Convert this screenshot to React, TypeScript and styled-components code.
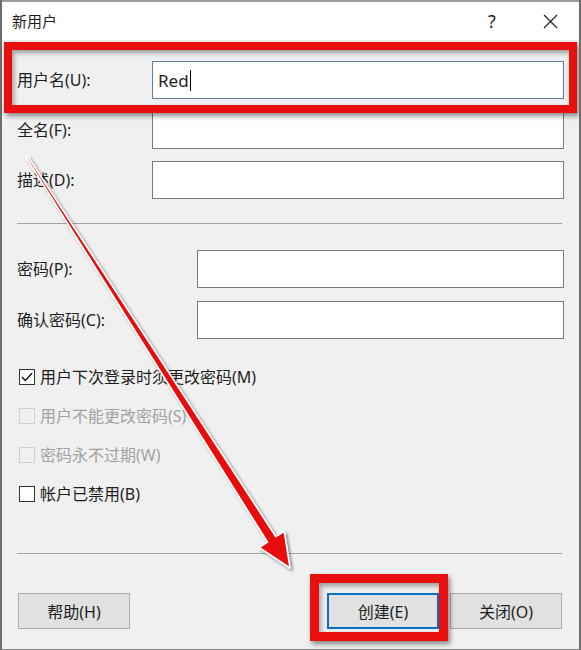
import React from 'react';
import styled, { createGlobalStyle } from 'styled-components';

const GlobalStyle = createGlobalStyle`
    body {
        margin: 0;
        background: #f0f0f0;
        font-family: "Noto Sans", "Noto Sans CJK SC", sans-serif;
        color: #1e1e1e;
    }
`;

const Window = styled.div`
    position: relative;
    width: 581px;
    height: 650px;
    box-sizing: border-box;
    border-left: 2px solid #6d6d6d;
    border-right: 2px solid #6d6d6d;
    border-bottom: 1px solid #8a8a8a;
    background: #f0f0f0;
    display: flex;
    flex-direction: column;
    overflow: hidden;
`;

const TitleBar = styled.div`
    height: 40px;
    box-sizing: border-box;
    border-top: 2px solid #9c9c9c;
    background: #ffffff;
    display: flex;
    align-items: center;
    padding-left: 10px;
    padding-right: 6px;
`;

const Title = styled.div`
    flex: 1;
    font-size: 15px;
    line-height: 20px;
`;

const TitleButton = styled.div<{ $gap?: number }>`
    width: 46px;
    height: 38px;
    display: flex;
    align-items: center;
    justify-content: center;
    margin-right: ${p => p.$gap ?? 0}px;
    font-size: 18px;
    color: #222;
`;

const Body = styled.div`
    display: flex;
    flex-direction: column;
    padding: 0 15px;
`;

const FormRow = styled.div<{ $top: number }>`
    position: relative;
    display: flex;
    align-items: center;
    height: 38px;
    margin-top: ${p => p.$top}px;
`;

const Label = styled.div<{ $width: number }>`
    width: ${p => p.$width}px;
    flex-shrink: 0;
    font-size: 16px;
    line-height: 20px;
`;

const TextBox = styled.div<{ $focused?: boolean }>`
    flex: 1;
    height: 38px;
    box-sizing: border-box;
    border: 1px solid ${p => (p.$focused ? '#5d7f9e' : '#7a7a7a')};
    background: #ffffff;
    display: flex;
    align-items: center;
    padding-left: 5px;
    font-size: 17px;
`;

const Caret = styled.span`
    display: inline-block;
    width: 1px;
    height: 21px;
    margin-left: 1px;
    background: #000;
`;

const Separator = styled.div<{ $top: number }>`
    height: 1px;
    margin-top: ${p => p.$top}px;
    margin-right: 2px;
    background: #a3a3a3;
`;

const CheckRow = styled.div<{ $top: number; $disabled?: boolean }>`
    display: flex;
    align-items: center;
    gap: 5px;
    height: 24px;
    margin-top: ${p => p.$top}px;
    padding-left: 2px;
    font-size: 16px;
    line-height: 20px;
    color: ${p => (p.$disabled ? '#a2a2a2' : '#1e1e1e')};
`;

const Box = styled.span<{ $disabled?: boolean }>`
    width: 16px;
    height: 16px;
    box-sizing: border-box;
    border: 1px solid ${p => (p.$disabled ? '#cfcfcf' : '#333333')};
    background: ${p => (p.$disabled ? '#f0f0f0' : '#ffffff')};
    display: flex;
    align-items: center;
    justify-content: center;
`;

const ButtonRow = styled.div`
    display: flex;
    gap: 11px;
    margin-top: 39px;
    padding-left: 1px;
    padding-right: 2px;
`;

const Spacer = styled.div`
    flex: 1;
`;

const ButtonWrap = styled.div`
    position: relative;
    display: flex;
`;

const Button = styled.div<{ $default?: boolean }>`
    width: 112px;
    height: 36px;
    box-sizing: border-box;
    border: ${p => (p.$default ? '2px solid #0a6fc9' : '1px solid #adadad')};
    background: #e1e1e1;
    display: flex;
    align-items: center;
    justify-content: center;
    font-size: 16px;
`;

const Highlight = styled.div<{ $l: number; $t: number; $r: number; $b: number; $w: number }>`
    position: absolute;
    left: ${p => p.$l}px;
    top: ${p => p.$t}px;
    right: ${p => p.$r}px;
    bottom: ${p => p.$b}px;
    border: ${p => p.$w}px solid #e8100f;
    box-shadow: 2px 3px 5px rgba(0, 0, 0, 0.45), inset 2px 3px 5px rgba(0, 0, 0, 0.35);
    pointer-events: none;
    z-index: 2;
`;

const ArrowLayer = styled.svg`
    position: absolute;
    left: -2px;
    top: 0;
    width: 581px;
    height: 650px;
    pointer-events: none;
    z-index: 3;
`;

interface CheckItemProps {
    label: string;
    top: number;
    checked?: boolean;
    disabled?: boolean;
}

const CheckItem: React.FC<CheckItemProps> = ({ label, top, checked, disabled }) => (
    <CheckRow $top={top} $disabled={disabled}>
        <Box $disabled={disabled}>
            {checked && (
                <svg width="12" height="10" viewBox="0 0 12 10">
                    <path d="M1 5 L4.3 8.5 L11 1.2" fill="none" stroke="#111" strokeWidth="1.4" />
                </svg>
            )}
        </Box>
        {label}
    </CheckRow>
);

// tapered red annotation arrow, from the 全名 label down to 创建
const Arrow = () => {
    const pts = '27.8,156.5 275.9,536.7 284.3,531.3 290,568 259.1,547.5 267.5,542.1 26.2,157.5';
    return (
        <ArrowLayer viewBox="0 0 581 650">
            <defs>
                <filter id="shade" x="-10%" y="-10%" width="130%" height="130%">
                    <feDropShadow dx="2" dy="2" stdDeviation="1.6" floodColor="#000" floodOpacity="0.45" />
                </filter>
            </defs>
            <polygon points={pts} fill="#e8100f" stroke="#ffffff" strokeWidth="1.6" strokeLinejoin="round" filter="url(#shade)" />
        </ArrowLayer>
    );
};

export default function App() {
    return (
        <>
            <GlobalStyle />
            <Window>
                <TitleBar>
                    <Title>新用户</Title>
                    <TitleButton $gap={12}>?</TitleButton>
                    <TitleButton>
                        <svg width="15" height="15" viewBox="0 0 15 15">
                            <path d="M1 1 L14 14 M14 1 L1 14" stroke="#222" strokeWidth="1.2" />
                        </svg>
                    </TitleButton>
                </TitleBar>
                <Body>
                    <FormRow $top={21}>
                        <Label $width={135}>用户名(U):</Label>
                        <TextBox $focused>
                            Red<Caret />
                        </TextBox>
                        <Highlight $l={-13} $t={-19} $r={-13} $b={-14} $w={8} />
                    </FormRow>
                    <FormRow $top={12}>
                        <Label $width={135}>全名(F):</Label>
                        <TextBox />
                    </FormRow>
                    <FormRow $top={12}>
                        <Label $width={135}>描述(D):</Label>
                        <TextBox />
                    </FormRow>
                    <Separator $top={24} />
                    <FormRow $top={26}>
                        <Label $width={180}>密码(P):</Label>
                        <TextBox />
                    </FormRow>
                    <FormRow $top={13}>
                        <Label $width={180}>确认密码(C):</Label>
                        <TextBox />
                    </FormRow>
                    <CheckItem top={26} checked label="用户下次登录时须更改密码(M)" />
                    <CheckItem top={15} disabled label="用户不能更改密码(S)" />
                    <CheckItem top={15} disabled label="密码永不过期(W)" />
                    <CheckItem top={15} label="帐户已禁用(B)" />
                    <Separator $top={47} />
                    <ButtonRow>
                        <Button>帮助(H)</Button>
                        <Spacer />
                        <ButtonWrap>
                            <Button $default>创建(E)</Button>
                            <Highlight $l={-17} $t={-19} $r={-9} $b={-12} $w={9} />
                        </ButtonWrap>
                        <Button>关闭(O)</Button>
                    </ButtonRow>
                </Body>
                <Arrow />
            </Window>
        </>
    );
}
